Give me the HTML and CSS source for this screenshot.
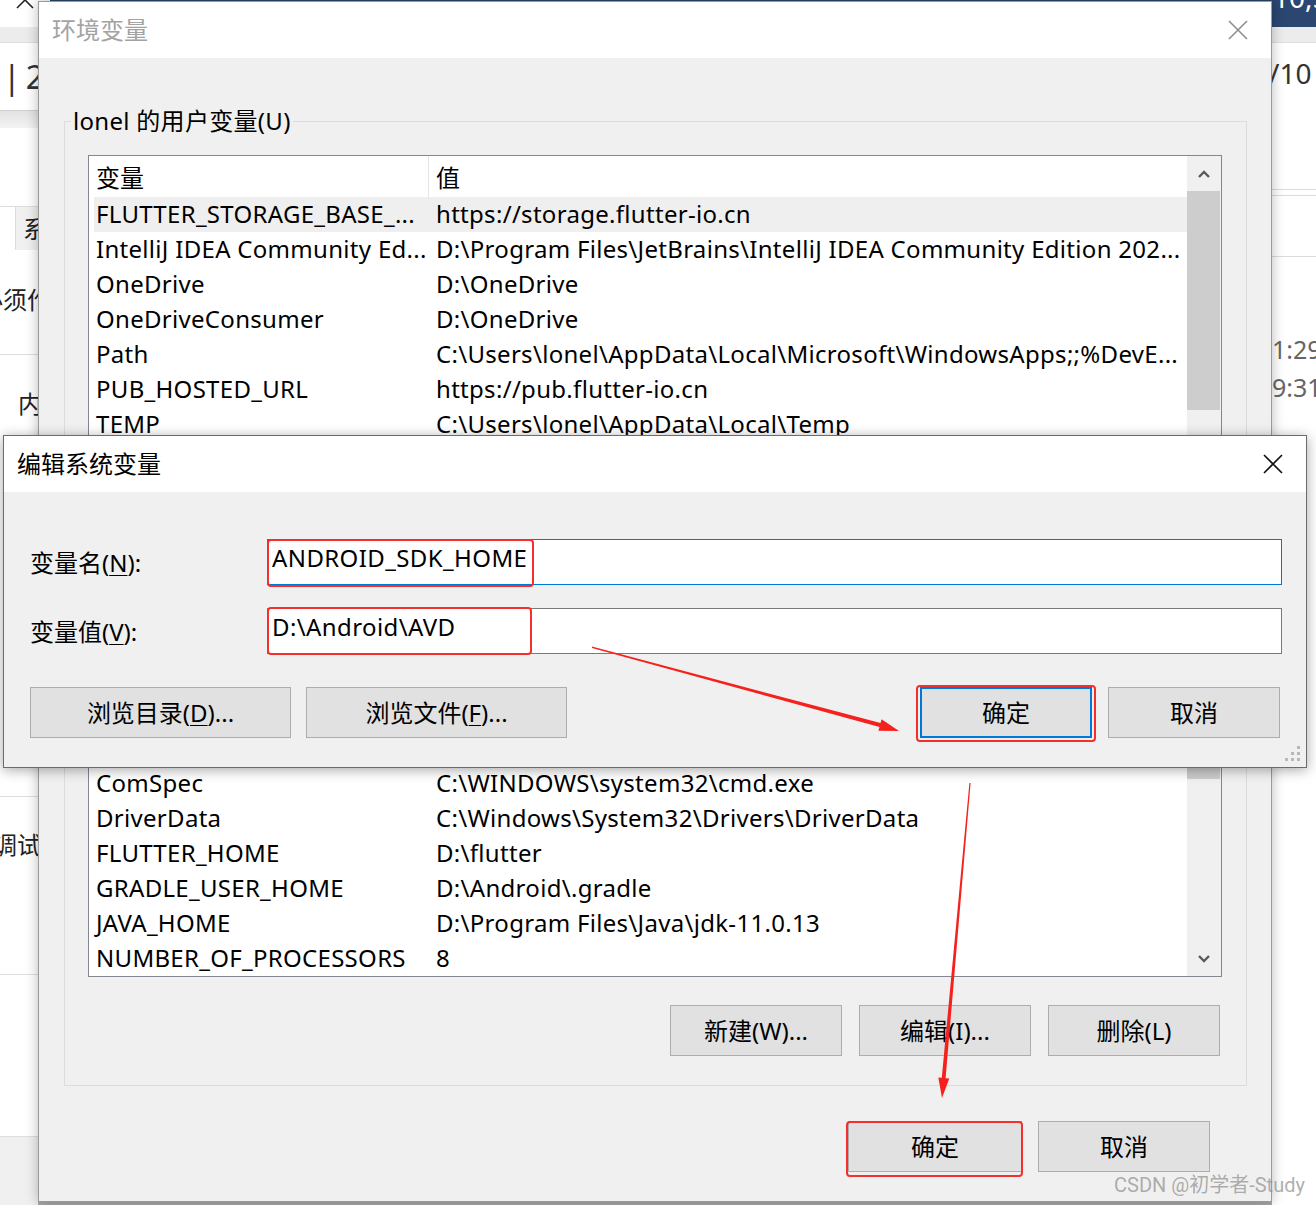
FILE: index.html
```html
<!DOCTYPE html>
<html lang="zh-CN">
<head>
<meta charset="utf-8">
<title>环境变量</title>
<link rel="stylesheet" href="styles.css">
</head>
<body>
<div class="screen">
  <div class="backdrop">
    <div class="bg-left">
      <div class="bl-top">
        <svg class="bl-x" width="20" height="10" viewBox="0 0 20 10"><path d="M2 8 L10 0 M18 8 L10 0" stroke="#222" stroke-width="1.6" fill="none"/></svg>
      </div>
      <div class="bg-band"></div>
      <div class="bl-crumb"><span class="pipe">|</span><span class="num">2</span></div>
      <div class="bl-band2"></div>
      <div class="bl-space"></div>
      <div class="bl-tabs"><span class="bl-tab-blank"></span><span class="bl-tab">系</span></div>
      <div class="bl-text1"><span>必须作</span></div>
      <div class="bl-text2"><span>内</span></div>
      <div class="bl-hidden"></div>
      <div class="bl-text3"><span>调试</span></div>
      <div class="bl-row"></div>
      <div class="bl-foot"></div>
    </div>
    <div class="bg-mid">
      <div class="mid-bar"></div>
      <div class="mid-foot"></div>
    </div>
    <div class="bg-right">
      <div class="br-top"><span>10,5</span></div>
      <div class="bg-band"></div>
      <div class="br-text">/10</div>
      <div class="br-gap"></div>
      <div class="br-sec"></div>
      <div class="br-times"><span>1:29</span><span>9:31</span></div>
    </div>
  </div>

  <div class="win main">
    <div class="titlebar">
      <span class="title inactive">环境变量</span>
      <svg class="close" width="20" height="20" viewBox="0 0 20 20"><path d="M1 1 L19 19 M19 1 L1 19" stroke="#8e8e8e" stroke-width="1.6" fill="none"/></svg>
    </div>
    <div class="main-body">
      <fieldset class="group group-user">
        <legend>lonel 的用户变量(U)</legend>
        <div class="listbox">
          <div class="list-main">
            <div class="list-head"><span>变量</span><span>值</span></div>
            <div class="row selected"><span>FLUTTER_STORAGE_BASE_...</span><span>https://storage.flutter-io.cn</span></div>
            <div class="row"><span>IntelliJ IDEA Community Ed...</span><span>D:\Program Files\JetBrains\IntelliJ IDEA Community Edition 202...</span></div>
            <div class="row"><span>OneDrive</span><span>D:\OneDrive</span></div>
            <div class="row"><span>OneDriveConsumer</span><span>D:\OneDrive</span></div>
            <div class="row"><span>Path</span><span>C:\Users\lonel\AppData\Local\Microsoft\WindowsApps;;%DevE...</span></div>
            <div class="row"><span>PUB_HOSTED_URL</span><span>https://pub.flutter-io.cn</span></div>
            <div class="row"><span>TEMP</span><span>C:\Users\lonel\AppData\Local\Temp</span></div>
            <div class="row"><span>TMP</span><span>C:\Users\lonel\AppData\Local\Temp</span></div>
          </div>
          <div class="vscroll user-scroll">
            <span class="arrow"><svg width="12" height="8" viewBox="0 0 12 8"><path d="M1 7 L6 2 L11 7" stroke="#5a5a5a" stroke-width="2.4" fill="none"/></svg></span>
            <span class="thumb"></span>
            <span class="track"></span>
          </div>
        </div>
      </fieldset>

      <fieldset class="group group-sys">
        <legend>系统变量(S)</legend>
        <div class="listbox">
          <div class="list-main">
            <div class="list-head"><span>变量</span><span>值</span></div>
            <div class="row"><span>ANDROID_HOME</span><span>D:\Android\Sdk</span></div>
            <div class="row"><span>ANDROID_SDK_HOME</span><span>D:\Android\AVD</span></div>
            <div class="row"><span>ANDROID_SDK_ROOT</span><span>D:\Android\Sdk</span></div>
            <div class="row"><span>CLASSPATH</span><span>.;%JAVA_HOME%\lib</span></div>
            <div class="row"><span>CommonProgramFiles</span><span>C:\Program Files\Common Files</span></div>
            <div class="row"><span>ComSpec</span><span>C:\WINDOWS\system32\cmd.exe</span></div>
            <div class="row"><span>DriverData</span><span>C:\Windows\System32\Drivers\DriverData</span></div>
            <div class="row"><span>FLUTTER_HOME</span><span>D:\flutter</span></div>
            <div class="row"><span>GRADLE_USER_HOME</span><span>D:\Android\.gradle</span></div>
            <div class="row"><span>JAVA_HOME</span><span>D:\Program Files\Java\jdk-11.0.13</span></div>
            <div class="row"><span>NUMBER_OF_PROCESSORS</span><span>8</span></div>
          </div>
          <div class="vscroll sys-scroll">
            <span class="arrow"><svg width="12" height="8" viewBox="0 0 12 8"><path d="M1 7 L6 2 L11 7" stroke="#5a5a5a" stroke-width="2.4" fill="none"/></svg></span>
            <span class="thumb"></span>
            <span class="track"></span>
            <span class="arrow"><svg width="12" height="8" viewBox="0 0 12 8"><path d="M1 1 L6 6 L11 1" stroke="#5a5a5a" stroke-width="2.4" fill="none"/></svg></span>
          </div>
        </div>
        <div class="group-buttons">
          <button class="btn">新建(W)...</button>
          <button class="btn">编辑(I)...</button>
          <button class="btn">删除(L)</button>
        </div>
      </fieldset>

      <div class="dialog-buttons">
        <button class="btn btn-wide">确定</button>
        <button class="btn">取消</button>
      </div>
    </div>
  </div>

  <div class="win edit">
    <div class="titlebar">
      <span class="title">编辑系统变量</span>
      <svg class="close" width="20" height="20" viewBox="0 0 20 20"><path d="M1 1 L19 19 M19 1 L1 19" stroke="#111" stroke-width="1.6" fill="none"/></svg>
    </div>
    <div class="edit-body">
      <div class="field field-first">
        <label>变量名(<u>N</u>):</label>
        <div class="input focused">ANDROID_SDK_HOME</div>
      </div>
      <div class="field field-second">
        <label>变量值(<u>V</u>):</label>
        <div class="input">D:\Android\AVD</div>
      </div>
      <div class="edit-buttons">
        <button class="btn btn-browse">浏览目录(<u>D</u>)...</button>
        <button class="btn btn-browse">浏览文件(<u>F</u>)...</button>
        <span class="spacer"></span>
        <button class="btn btn-default">确定</button>
        <button class="btn">取消</button>
      </div>
    </div>
    <svg class="grip" width="18" height="18" viewBox="0 0 18 18">
      <rect x="12" y="0" width="3" height="3" fill="#b8b8b8"/>
      <rect x="6" y="6" width="3" height="3" fill="#b8b8b8"/>
      <rect x="12" y="6" width="3" height="3" fill="#b8b8b8"/>
      <rect x="0" y="12" width="3" height="3" fill="#b8b8b8"/>
      <rect x="6" y="12" width="3" height="3" fill="#b8b8b8"/>
      <rect x="12" y="12" width="3" height="3" fill="#b8b8b8"/>
    </svg>
  </div>

  <div class="mark mark-name"></div>
  <div class="mark mark-value"></div>
  <div class="mark mark-ok1"></div>
  <div class="mark mark-ok2"></div>
  <svg class="arrows" width="1316" height="1205" viewBox="0 0 1316 1205">
    <polygon points="592,646.5 880.5,723.1 881.6,719.2 899,731 878.4,730.8 879.5,726.9 592,648" fill="#f4211c"/>
    <polygon points="970.6,783 945.6,1078.2 949.3,1078.5 942,1098 938.3,1077.5 941.8,1077.8 969.4,783" fill="#f4211c"/>
  </svg>
  <div class="watermark">CSDN @初学者-Study</div>
</div>
</body>
</html>
```
FILE: styles.css
```css
* { box-sizing: border-box; }
html, body { margin: 0; padding: 0; }
body {
  font-family: "Noto Sans", "Noto Sans CJK SC", sans-serif;
  font-size: 24px;
  color: #000;
  background: #fff;
}
u { text-decoration: underline; text-underline-offset: 3px; text-decoration-thickness: 1px; }

.screen { position: relative; width: 1316px; height: 1205px; overflow: hidden; background: #fff; }

/* ---------- background application ---------- */
.backdrop { display: flex; height: 100%; }
.bg-left { width: 38px; flex: none; display: flex; flex-direction: column; overflow: hidden; white-space: nowrap; }
.bg-mid { flex: 1; display: flex; flex-direction: column; justify-content: space-between; }
.bg-right { width: 44px; flex: none; display: flex; flex-direction: column; overflow: hidden; white-space: nowrap; }

.bl-top { height: 27px; display: flex; padding-left: 15px; flex: none; }
.bl-x { display: block; }
.bg-band { height: 16px; flex: none; background: #ececec; border-bottom: 1px solid #dedede; }
.bl-crumb { height: 67px; flex: none; display: flex; align-items: center; gap: 5px; padding-left: 3px; font-size: 32px; line-height: 40px; color: #333; }
.bl-crumb span { flex: none; }
.bl-band2 { height: 18px; flex: none; background: linear-gradient(#e2e2e2, #f3f3f3); border-top: 1px solid #d0d0d0; }
.bl-space { height: 78px; flex: none; }
.bl-tabs { height: 44px; flex: none; display: flex; }
.bl-tab-blank { width: 16px; flex: none; border-top: 1px solid #dcdcdc; border-right: 1px solid #dcdcdc; }
.bl-tab { flex: 1; min-width: 0; overflow: hidden; background: #f0f0f0; border-top: 1px solid #dcdcdc; padding: 6px 0 0 7px; line-height: 32px; color: #222; }
.bl-text1 { height: 105px; flex: none; border-bottom: 1px solid #dedede; padding-top: 34px; line-height: 32px; color: #222; }
.bl-text1 span { display: block; margin-left: -21px; }
.bl-text2 { height: 79px; flex: none; padding: 33px 0 0 18px; line-height: 32px; color: #222; }
.bl-hidden { height: 363px; flex: none; border-bottom: 1px solid #dedede; }
.bl-text3 { height: 178px; flex: none; border-bottom: 1px solid #dedede; padding-top: 32px; line-height: 32px; color: #222; }
.bl-text3 span { display: block; margin-left: -7px; }
.bl-row { height: 162px; flex: none; border-bottom: 1px solid #dedede; }
.bl-foot { flex: 1; background: #f0f0f0; }

.mid-bar { height: 27px; margin-left: 12px; background: #2b4670; }
.mid-foot { height: 4px; background: #a9a9a9; }

.br-top { height: 27px; flex: none; background: #2b4670; color: #fff; font-size: 28px; line-height: 28px; overflow: hidden; padding-left: 1px; }
.br-top span { display: block; margin-top: -17px; }
.br-text { height: 147px; flex: none; border-bottom: 1px solid #dcdcdc; font-size: 28px; line-height: 60px; color: #333; margin-left: -3px; }
.br-gap { height: 6px; flex: none; border-bottom: 1px solid #dcdcdc; }
.br-sec { height: 61px; flex: none; border-bottom: 1px solid #dcdcdc; }
.br-times { flex: 1; display: flex; flex-direction: column; padding-top: 73px; font-size: 25px; line-height: 38px; color: #666; }

/* ---------- windows ---------- */
.win { position: absolute; display: flex; flex-direction: column; background: #f0f0f0; }
.titlebar { height: 56px; flex: none; background: #fff; display: flex; align-items: center; justify-content: space-between; padding: 0 23px 0 13px; }
.title { font-size: 24px; line-height: 32px; }
.title.inactive { color: #a3a3a3; }
.close { display: block; }

.main {
  left: 38px; top: 1px; width: 1234px; height: 1201px;
  border: 1px solid #9a9a9a;
  box-shadow: 0 0 12px rgba(0, 0, 0, 0.28);
}
.main-body { flex: 1; display: flex; flex-direction: column; }

.group {
  margin: 0 24px 0 25px;
  padding: 18px 24px 0 23px;
  border: 1px solid #dcdcdc;
  min-width: 0;
}
.group legend { font-size: 24px; line-height: 32px; padding: 0 2px; margin-left: -17px; letter-spacing: 0.3px; }
.group-user { margin-top: 47px; padding-bottom: 10px; }
.group-sys { margin-top: 10px; padding-bottom: 29px; }

.listbox { display: flex; border: 1px solid #828790; background: #fff; }
.list-main { flex: 1; min-width: 0; }
.list-head { display: grid; grid-template-columns: 340px 1fr; height: 41px; line-height: 43px; }
.list-head span { padding-left: 7px; }
.list-head span:first-child { border-right: 1px solid #e5e5e5; }
.row { display: grid; grid-template-columns: 340px 1fr; height: 35px; line-height: 33px; white-space: nowrap; letter-spacing: 0.3px; }
.row span { overflow: hidden; padding-left: 7px; }
.row.selected { background: linear-gradient(to right, #fff 5px, #efefef 5px); }

.vscroll { width: 34px; flex: none; display: flex; flex-direction: column; background: #f0f0f0; }
.vscroll .arrow { height: 35px; flex: none; display: flex; align-items: center; justify-content: center; }
.vscroll .arrow svg { display: block; }
.vscroll .thumb { margin: 0 1px 0 0; background: #cdcdcd; flex: none; }
.vscroll .track { flex: 1; }
.user-scroll .thumb { height: 219px; }
.sys-scroll .thumb { height: 194px; }

.btn {
  font-family: inherit; font-size: 24px; color: #000;
  height: 51px; width: 172px;
  background: #e1e1e1; border: 1px solid #adadad; border-radius: 0;
  padding: 0; line-height: 30px; flex: none;
}
.group-buttons { display: flex; justify-content: flex-end; gap: 17px; margin-top: 28px; margin-right: 2px; }
.dialog-buttons { display: flex; justify-content: flex-end; gap: 16px; margin-top: 35px; padding-right: 61px; }
.btn-wide { width: 174px; }

/* ---------- edit dialog ---------- */
.edit {
  left: 3px; top: 435px; width: 1304px; height: 333px;
  border: 1px solid #6c6c6c;
  box-shadow: 0 2px 12px rgba(0, 0, 0, 0.35);
}
.edit-body { flex: 1; padding: 0 24px 0 26px; display: flex; flex-direction: column; }
.field { display: grid; grid-template-columns: 237px 1fr; align-items: center; }
.field-first { margin-top: 47px; }
.field-second { margin-top: 23px; }
.field label { line-height: 32px; padding-top: 2px; }
.input {
  height: 46px; background: #fff; border: 1px solid #7a7a7a;
  padding: 0 0 6px 4px; line-height: 36px; white-space: nowrap; letter-spacing: 0.4px;
}
.input.focused { border-color: #0078d7; }
.edit-buttons { display: flex; gap: 15px; margin-top: 33px; margin-right: 2px; }
.edit-buttons .spacer { flex: 1; }
.btn-browse { width: 261px; }
.btn-default { border: 2px solid #0078d7; margin-right: 1px; }
.grip { position: absolute; right: 3px; bottom: 3px; }

/* ---------- annotations ---------- */
.mark { position: absolute; border: 2px solid #f3302c; border-radius: 4px; }
.mark-name { left: 267px; top: 539px; width: 267px; height: 48px; }
.mark-value { left: 267px; top: 607px; width: 265px; height: 48px; }
.mark-ok1 { left: 916px; top: 685px; width: 180px; height: 57px; }
.mark-ok2 { left: 846px; top: 1121px; width: 177px; height: 56px; }
.arrows { position: absolute; left: 0; top: 0; pointer-events: none; }
.watermark {
  position: absolute; left: 1114px; top: 1171px;
  font-family: Roboto, "Noto Sans CJK SC", sans-serif; font-size: 20px; line-height: 28px;
  color: rgba(140, 140, 140, 0.7); white-space: nowrap;
}
```
